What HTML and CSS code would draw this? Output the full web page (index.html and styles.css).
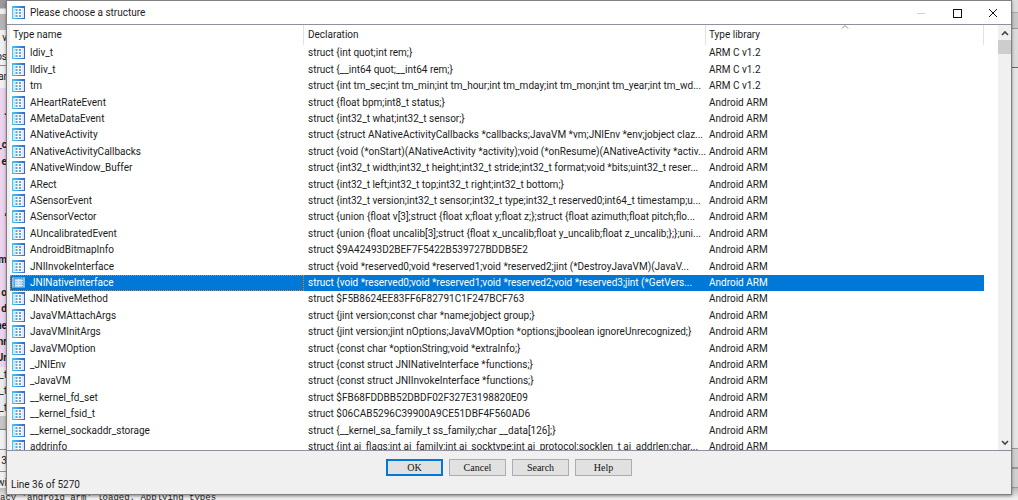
FILE: index.html
```html
<!DOCTYPE html>
<html lang="en">
<head>
<meta charset="utf-8">
<title>Please choose a structure</title>
<link rel="stylesheet" href="styles.css">
</head>
<body>
<svg class="defs" width="0" height="0" aria-hidden="true">
  <defs>
    <linearGradient id="frame" x1="0" y1="0" x2="1" y2="0">
      <stop offset="0" stop-color="#45c8f5"/>
      <stop offset="1" stop-color="#3a62cc"/>
    </linearGradient>
    <symbol id="struct" viewBox="0 0 13 13">
      <rect x="0" y="0" width="13" height="13" fill="url(#frame)"/>
      <rect x="1" y="2" width="2" height="10" fill="#c9ecfb"/>
      <rect x="3" y="2" width="7" height="10" fill="#f4faff"/>
      <rect x="10" y="2" width="2" height="10" fill="#dfe8fb"/>
      <path d="M3.500 4h2M7 4h2M3.500 7h2M7 7h2M3.500 10h2M7 10h2" stroke="#3c82c4" stroke-width="1.6"/>
    </symbol>
    <symbol id="struct-selected" viewBox="0 0 13 13">
      <rect x="0" y="1" width="13" height="11" fill="#5aa5e2"/>
      <path d="M1 2v9M12 2v9" stroke="#b5d6f2"/>
      <rect x="3" y="3" width="7" height="8" fill="#a9cff0"/>
      <path d="M3 4.500h8M3 7h8M3 9.500h8M6.500 3v8" stroke="#dcecf9"/>
    </symbol>
  </defs>
</svg>

<div class="editor" aria-hidden="true">
  <div class="gutter">
    <div class="tool top"></div>
    <div class="tool dark"></div>
    <div class="tool">v</div>
    <div class="tool lined">os</div>
    <div class="tool">ar</div>
    <div class="code">
      <p></p><p>.</p><p></p><p>_c</p><p>e</p><p></p><p></p><p>,</p><p></p><p></p><p>m</p><p></p><p>o</p><p>d</p><p>ne</p><p>nr</p><p>_Jr</p>
    </div>
    <div class="code plain"><p>_t</p><p>_t</p><p>_t</p></div>
    <div class="hscroll"></div>
    <div class="tool lined"></div>
    <div class="tool lined">13</div>
    <div class="tool lined">wi</div>
  </div>
  <div class="rail">
    <div class="rail-top"></div>
    <div class="rail-bar"></div>
    <div class="rail-panel"></div>
    <div class="rail-page"></div>
    <div class="rail-bar tall"></div>
    <div class="rail-bar tall"></div>
  </div>
  <pre class="output">acy 'android_arm' loaded. Applying types</pre>
</div>

<main class="dialog">
  <header class="titlebar">
    <svg class="icon"><use href="#struct"/></svg>
    <h1>Please choose a structure</h1>
    <button class="control" aria-label="Minimize" disabled><svg viewBox="0 0 10 10"><path d="M1 5.500h8" stroke="#d0d0d0"/></svg></button>
    <button class="control" aria-label="Maximize"><svg viewBox="0 0 10 10"><rect x="1.500" y="1.500" width="8" height="8" fill="none" stroke="#111"/></svg></button>
    <button class="control" aria-label="Close"><svg viewBox="0 0 10 10"><path d="M1 1l8 8M9 1l-8 8" stroke="#111"/></svg></button>
  </header>

  <section class="chooser">
    <div class="list">
      <table>
        <colgroup><col class="name"><col class="decl"><col class="lib"><col></colgroup>
        <thead>
          <tr><th scope="col">Type name</th><th scope="col">Declaration</th><th scope="col" aria-sort="ascending">Type library<svg class="sort" viewBox="0 0 8 4"><path d="M1 3.500l3-3 3 3" fill="none" stroke="#888"/></svg></th><td></td></tr>
        </thead>
        <tbody>
          <tr><td><svg class="icon"><use href="#struct"/></svg>ldiv_t</td><td>struct {int quot;int rem;}</td><td>ARM C v1.2</td></tr>
          <tr><td><svg class="icon"><use href="#struct"/></svg>lldiv_t</td><td>struct {__int64 quot;__int64 rem;}</td><td>ARM C v1.2</td></tr>
          <tr><td><svg class="icon"><use href="#struct"/></svg>tm</td><td>struct {int tm_sec;int tm_min;int tm_hour;int tm_mday;int tm_mon;int tm_year;int tm_wd...</td><td>ARM C v1.2</td></tr>
          <tr><td><svg class="icon"><use href="#struct"/></svg>AHeartRateEvent</td><td>struct {float bpm;int8_t status;}</td><td>Android ARM</td></tr>
          <tr><td><svg class="icon"><use href="#struct"/></svg>AMetaDataEvent</td><td>struct {int32_t what;int32_t sensor;}</td><td>Android ARM</td></tr>
          <tr><td><svg class="icon"><use href="#struct"/></svg>ANativeActivity</td><td>struct {struct ANativeActivityCallbacks *callbacks;JavaVM *vm;JNIEnv *env;jobject claz...</td><td>Android ARM</td></tr>
          <tr><td><svg class="icon"><use href="#struct"/></svg>ANativeActivityCallbacks</td><td>struct {void (*onStart)(ANativeActivity *activity);void (*onResume)(ANativeActivity *activ...</td><td>Android ARM</td></tr>
          <tr><td><svg class="icon"><use href="#struct"/></svg>ANativeWindow_Buffer</td><td>struct {int32_t width;int32_t height;int32_t stride;int32_t format;void *bits;uint32_t reser...</td><td>Android ARM</td></tr>
          <tr><td><svg class="icon"><use href="#struct"/></svg>ARect</td><td>struct {int32_t left;int32_t top;int32_t right;int32_t bottom;}</td><td>Android ARM</td></tr>
          <tr><td><svg class="icon"><use href="#struct"/></svg>ASensorEvent</td><td>struct {int32_t version;int32_t sensor;int32_t type;int32_t reserved0;int64_t timestamp;u...</td><td>Android ARM</td></tr>
          <tr><td><svg class="icon"><use href="#struct"/></svg>ASensorVector</td><td>struct {union {float v[3];struct {float x;float y;float z;};struct {float azimuth;float pitch;flo...</td><td>Android ARM</td></tr>
          <tr><td><svg class="icon"><use href="#struct"/></svg>AUncalibratedEvent</td><td>struct {union {float uncalib[3];struct {float x_uncalib;float y_uncalib;float z_uncalib;};};uni...</td><td>Android ARM</td></tr>
          <tr><td><svg class="icon"><use href="#struct"/></svg>AndroidBitmapInfo</td><td>struct $9A42493D2BEF7F5422B539727BDDB5E2</td><td>Android ARM</td></tr>
          <tr><td><svg class="icon"><use href="#struct"/></svg>JNIInvokeInterface</td><td>struct {void *reserved0;void *reserved1;void *reserved2;jint (*DestroyJavaVM)(JavaV...</td><td>Android ARM</td></tr>
          <tr class="selected" aria-selected="true"><td><svg class="icon"><use href="#struct-selected"/></svg>JNINativeInterface</td><td>struct {void *reserved0;void *reserved1;void *reserved2;void *reserved3;jint (*GetVers...</td><td>Android ARM</td></tr>
          <tr><td><svg class="icon"><use href="#struct"/></svg>JNINativeMethod</td><td>struct $F5B8624EE83FF6F82791C1F247BCF763</td><td>Android ARM</td></tr>
          <tr><td><svg class="icon"><use href="#struct"/></svg>JavaVMAttachArgs</td><td>struct {jint version;const char *name;jobject group;}</td><td>Android ARM</td></tr>
          <tr><td><svg class="icon"><use href="#struct"/></svg>JavaVMInitArgs</td><td>struct {jint version;jint nOptions;JavaVMOption *options;jboolean ignoreUnrecognized;}</td><td>Android ARM</td></tr>
          <tr><td><svg class="icon"><use href="#struct"/></svg>JavaVMOption</td><td>struct {const char *optionString;void *extraInfo;}</td><td>Android ARM</td></tr>
          <tr><td><svg class="icon"><use href="#struct"/></svg>_JNIEnv</td><td>struct {const struct JNINativeInterface *functions;}</td><td>Android ARM</td></tr>
          <tr><td><svg class="icon"><use href="#struct"/></svg>_JavaVM</td><td>struct {const struct JNIInvokeInterface *functions;}</td><td>Android ARM</td></tr>
          <tr><td><svg class="icon"><use href="#struct"/></svg>__kernel_fd_set</td><td>struct $FB68FDDBB52DBDF02F327E3198820E09</td><td>Android ARM</td></tr>
          <tr><td><svg class="icon"><use href="#struct"/></svg>__kernel_fsid_t</td><td>struct $06CAB5296C39900A9CE51DBF4F560AD6</td><td>Android ARM</td></tr>
          <tr><td><svg class="icon"><use href="#struct"/></svg>__kernel_sockaddr_storage</td><td>struct {__kernel_sa_family_t ss_family;char __data[126];}</td><td>Android ARM</td></tr>
          <tr><td><svg class="icon"><use href="#struct"/></svg>addrinfo</td><td>struct {int ai_flags;int ai_family;int ai_socktype;int ai_protocol;socklen_t ai_addrlen;char...</td><td>Android ARM</td></tr>
        </tbody>
      </table>
    </div>
    <div class="scrollbar">
      <button aria-label="Scroll up"><svg viewBox="0 0 8 6"><path d="M1 5l3-3 3 3" fill="none" stroke="#444" stroke-width="1.6"/></svg></button>
      <div class="thumb"></div>
      <button class="down" aria-label="Scroll down"><svg viewBox="0 0 8 6"><path d="M1 1l3 3 3-3" fill="none" stroke="#444" stroke-width="1.6"/></svg></button>
    </div>
  </section>

  <footer>
    <div class="actions">
      <button class="default">OK</button>
      <button>Cancel</button>
      <button>Search</button>
      <button>Help</button>
    </div>
    <p class="status">Line 36 of 5270</p>
  </footer>
</main>
</body>
</html>
```
FILE: styles.css
```css
* { box-sizing: border-box; }

body {
  margin: 0;
  height: 100vh;
  position: relative;
  overflow: hidden;
  background: #e4e4e4;
  color: #1c1c1c;
  font: 10px/16px Roboto, "Noto Sans", sans-serif;
}

h1, p, pre { margin: 0; }
.defs { position: absolute; }

/* Editor window behind the dialog */
.editor {
  height: 100%;
  display: grid;
  grid-template: 1fr 12px / 7px 6px;
  justify-content: space-between;
  overflow: hidden;
}
.gutter { font-size: 10px; overflow: hidden; }
.gutter .tool, .gutter p {
  height: 16px;
  display: flex;
  justify-content: flex-end;
}
.gutter p:nth-child(5n+2), .gutter p:nth-child(5n+4) { height: 17px; }
.tool { background: #f0f0f0; }
.gutter .top { height: 14px; background: linear-gradient(#9a9a9a 8px, #eee 9px); }
.gutter .dark { background: #b4b4b4; }
.gutter .lined { height: 20px; border-bottom: 1px solid #8d8d8d; }
.tool + .lined { padding-top: 3px; }
.gutter .lined + .tool { height: 22px; padding-top: 3px; }
.code { background: #ecd4ee; font-weight: 700; }
.code.plain { background: #ececec; font-weight: 400; }
.hscroll { height: 14px; background: #c4c4c4; border-bottom: 1px solid #777; }
.rail { display: flex; flex-direction: column; }
.rail-top { height: 13px; background: #ddd; border-bottom: 1px solid #aaa; }
.rail-bar { height: 16px; background: #c8c8c8; border-bottom: 1px solid #999; }
.rail-bar.tall { height: 20px; border-top: 1px solid #999; background: #d0d0d0; }
.rail-panel { height: 39px; background: #dcdcdc; border-bottom: 1px solid #666; }
.rail-page { flex: 1; background: #e6e6e6; }
.output {
  grid-column: 1 / -1;
  overflow: hidden;
  background: linear-gradient(#bbb, #eee 10px);
  font: 9px/20px "Liberation Mono", monospace;
}

/* Dialog */
.dialog {
  position: absolute;
  inset: 0 6px 5px 6px;
  display: flex;
  flex-direction: column;
  border: 1px solid #808080;
  background: #f0f0f0;
  box-shadow: 0 1px 3px rgba(0, 0, 0, 0.4);
}
.titlebar {
  height: 24px;
  flex: none;
  display: flex;
  align-items: center;
  padding-left: 5px;
  border-bottom: 1px solid #8e919b;
  background: #fff;
}
.titlebar h1 { flex: 1; font-size: 10px; font-weight: 400; }
.icon { width: 13px; height: 13px; margin-right: 5px; }
.control {
  width: 36px;
  height: 22px;
  padding: 0;
  border: 0;
  background: none;
  display: grid;
  place-items: center;
}
.control svg { width: 10px; height: 10px; }

.chooser {
  flex: 1;
  min-height: 0;
  display: flex;
  padding-left: 3px;
  border-bottom: 1px solid #8e919b;
}
.list { flex: 1; min-width: 0; overflow: hidden; background: #fff; }
table { width: 100%; table-layout: fixed; border-collapse: separate; border-spacing: 0; }
.name { width: 294px; }
.decl { width: 402px; }
.lib { width: 278px; }
th, td { padding: 0 0 0 4px; white-space: nowrap; text-align: left; font-weight: 400; }
th { height: 20px; position: relative; border-right: 1px solid #e2e2e2; }
th:first-child, tr > :nth-child(3) { padding-left: 3px; }
.sort { position: absolute; top: 0; left: 50%; width: 8px; height: 4px; margin-left: -4px; }
td { line-height: 16px; }
td:first-child { padding-left: 2px; }
td .icon { vertical-align: top; margin-top: 1px; }
tbody tr { height: 16px; }
tbody tr:nth-child(5n+2), tbody tr:nth-child(5n+4) { height: 17px; }
.selected td { background: #0078d7; color: #fff; }
.selected td:first-child { outline: 1px dotted #b88a5a; outline-offset: -1px; }

.scrollbar { width: 13px; display: flex; flex-direction: column; background: #f0f0f0; }
.scrollbar button {
  height: 15px;
  padding: 0;
  border: 0;
  background: none;
  display: grid;
  place-items: center;
}
.scrollbar svg { width: 8px; height: 6px; }
.scrollbar .down { margin-top: auto; }
.thumb { height: 14px; background: #cdcdcd; }

footer { flex: none; padding: 8px 4px 0; }
.actions { display: flex; justify-content: center; gap: 6px; }
.actions button {
  width: 57px;
  height: 17px;
  padding: 0;
  border: 1px solid #adadad;
  background: #e1e1e1;
  color: #111;
  font: 10px "Liberation Serif", serif;
}
.actions .default { border: 2px solid #0078d7; }
.status { height: 18px; padding-top: 1px; }
```
